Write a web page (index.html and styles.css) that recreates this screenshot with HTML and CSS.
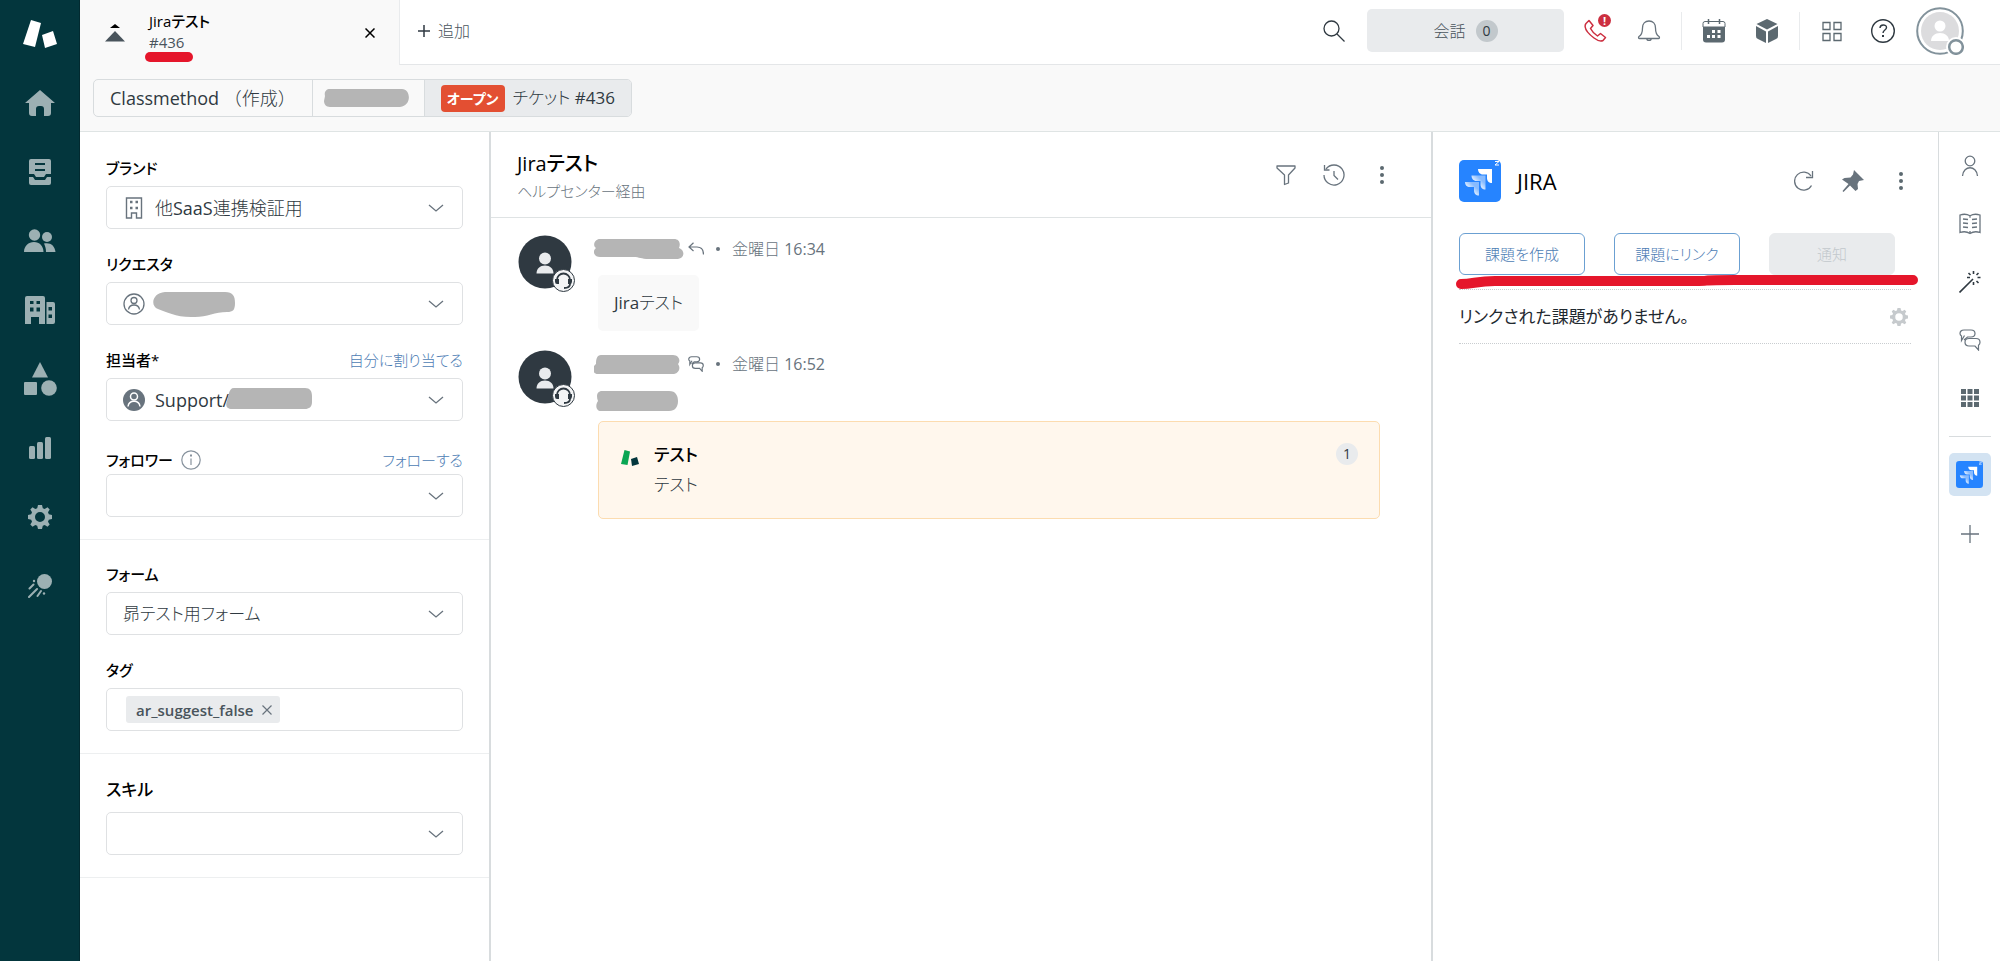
FILE: index.html
```html
<!DOCTYPE html>
<html lang="ja">
<head>
<meta charset="utf-8">
<title>Jiraテスト #436</title>
<link rel="stylesheet" href="styles.css">
</head>
<body>
<svg class="sprite" aria-hidden="true">
  <defs>
    <linearGradient id="fade" x1="1" y1="0" x2="0" y2="1"><stop offset="0.3" stop-color="#fff" stop-opacity="0.45"/><stop offset="0.7" stop-color="#fff"/></linearGradient>
  </defs>
  <symbol id="chevron" viewBox="0 0 16 16"><path d="M1 5l7 6 7-6" fill="none" stroke="currentColor" stroke-width="1.3"/></symbol>
  <symbol id="dots" viewBox="0 0 6 20"><circle cx="3" cy="3" r="2"/><circle cx="3" cy="10" r="2"/><circle cx="3" cy="17" r="2"/></symbol>
  <symbol id="gear" viewBox="0 0 24 24"><path fill-rule="evenodd" d="M10 0h4l.8 3.2 1.9.8L19.500 2.300l2.200 2.200L20 7.300l.8 1.900L24 10v4l-3.200.8-.8 1.900 1.700 2.800-2.200 2.200L16.700 20l-1.900.8L14 24h-4l-.8-3.200-1.900-.8-2.800 1.700-2.200-2.200L4 16.700l-.8-1.900L0 14v-4l3.200-.8L4 7.300 2.300 4.500l2.200-2.200L7.300 4l1.900-.8zM12 7a5 5 0 100 10 5 5 0 000-10z"/></symbol>
  <symbol id="jira" viewBox="0 0 42 42"><rect width="42" height="42" rx="5" fill="#2684ff"/><path d="M19 9h14v14c-3 0-5-2-5-5v-3.500h-4c-3 0-5-2.500-5-5.500z" fill="#fff"/><path d="M12.500 15.500h14v14c-3 0-5-2-5-5V21h-4c-3 0-5-2.500-5-5.500z" fill="url(#fade)"/><path d="M6 22h14v13.500c-3 0-5-2-5-5v-3.500h-4c-3 0-5-2-5-5z" fill="url(#fade)"/><path d="M36 1.500h4L36 5h4" fill="none" stroke="#fff" stroke-width="1"/></symbol>
  <symbol id="chat" viewBox="0 0 22 22"><path d="M5.500 6.500L2.500 11.500V7C1.500 6.300 1 5.500 1 4.500 1 2.500 2.500 1 5 1h7c2.500 0 4 1.500 4 3.500S14.500 8 12 8H8.500L5 11" /><path d="M10 9.500h7c2.500 0 4 1.700 4 3.700 0 1.300-.6 2.300-1.500 3V21l-3.500-4h-6c-2.500 0-4-1.700-4-3.700s1.500-3.800 4-3.800z"/></symbol>
  <symbol id="agent" viewBox="0 0 58 58"><circle cx="27" cy="27" r="26.500" fill="#2f3941"/><circle cx="27" cy="23.500" r="6" fill="#e9ebed"/><path d="M18.500 38.500c0-5 3.500-8 8.500-8s8.500 3 8.500 8z" fill="#e9ebed"/><circle cx="45.500" cy="45.500" r="11" fill="#f3f4f5" stroke="#2f3941"/><path d="M39 45a6.500 6.500 0 0113 0v4c0 2.500-2 4-6 4" fill="none" stroke="#2f3941" stroke-width="1.800"/><path d="M37 44h4v5h-2a2 2.500 0 01-2-2.500zM50 44h4v2.500a2 2.500 0 01-2 2.500h-2z" fill="#2f3941"/></symbol>
</svg>

<div class="app">
  <nav class="nav" aria-label="メイン">
    <a class="nav-logo" href="#" aria-label="ロゴ"><svg width="36" height="28" viewBox="0 0 36 28"><path d="M9 0l10 3-6 24-12-3z M20 15l11-4 4 13-12 4z" fill="#fff"/></svg></a>
    <a class="nav-item" href="#" aria-label="ホーム"><svg width="30" height="26" viewBox="0 0 30 26"><path d="M15 0l15 13h-4v10a3 3 0 01-3 3h-4v-7a3 3 0 00-3-3h-2a3 3 0 00-3 3v7H7a3 3 0 01-3-3V13H0z"/></svg></a>
    <a class="nav-item" href="#" aria-label="ビュー"><svg width="24" height="26" viewBox="0 0 24 26"><path fill-rule="evenodd" d="M3 0h18a2 2 0 012 2v13h-5l-2 3H8l-2-3H1V2a2 2 0 012-2zm4 4v2h10V4zm0 6v2h10v-2zM1 18h4l2 3h10l2-3h4v6a2 2 0 01-2 2H3a2 2 0 01-2-2z"/></svg></a>
    <a class="nav-item" href="#" aria-label="カスタマー"><svg width="32" height="23" viewBox="0 0 32 23"><circle cx="10.500" cy="6" r="5.700"/><circle cx="23" cy="8" r="5"/><path d="M0 23c0-6 4.500-10 10-10s9.500 4 9.500 10zM20 14.500c6-1.500 11 2 11.500 8.500H22c0-4-1-6-2-8.500z"/></svg></a>
    <a class="nav-item" href="#" aria-label="組織"><svg width="30" height="28" viewBox="0 0 30 28"><path fill-rule="evenodd" d="M2 0h16a2 2 0 012 2v26h-6v-7H6v7H0V2a2 2 0 012-2zm3 5v3h3.500V5zm6.500 0v3H15V5zM5 11.500v4h3.500v-4zm6.500 0v4H15v-4zM21.500 6H28a2 2 0 012 2v18a2 2 0 01-2 2h-6.500zM23.500 11v3.500H27V11zm0 7.500V22H27v-3.500z"/></svg></a>
    <a class="nav-item" href="#" aria-label="オブジェクト"><svg width="34" height="34" viewBox="0 0 34 34"><path d="M17 0l8 15.500H9z"/><rect x="1" y="20" width="13" height="13" rx="1"/><circle cx="26" cy="26" r="7.800"/></svg></a>
    <a class="nav-item" href="#" aria-label="レポート"><svg width="24" height="22" viewBox="0 0 24 22"><rect x="1" y="9" width="6" height="13" rx="1.500"/><rect x="9" y="5" width="6" height="17" rx="1.500"/><rect x="17" y="0" width="6" height="22" rx="1.500"/></svg></a>
    <a class="nav-item" href="#" aria-label="設定"><svg width="24" height="24"><use href="#gear"/></svg></a>
    <a class="nav-item" href="#" aria-label="その他"><svg width="24" height="24" viewBox="0 0 24 24"><circle cx="16.500" cy="7.500" r="7.500"/><circle cx="6" cy="7" r="1.200"/><circle cx="16" cy="19.500" r="1.200"/><path d="M1.500 14.500l4-4M1 23l8-8M9.500 22l3.500-5" fill="none" stroke="#9cb0b3" stroke-width="2" stroke-linecap="round"/></svg></a>
  </nav>

  <div class="workspace">
    <header class="topbar">
      <div class="tab">
        <svg class="tab-icon" width="20" height="18" viewBox="0 0 20 18"><path d="M10 0l5 4H5z" fill="#000"/><path d="M10 7l10 10.500H0z" fill="#49545c"/></svg>
        <div class="tab-text">
          <div class="tab-title">Jiraテスト</div>
          <div class="tab-id">#436</div>
          <span class="tab-mark"></span>
        </div>
        <button class="icon-btn" aria-label="閉じる"><svg width="10" height="10" viewBox="0 0 10 10"><path d="M.5.500l9 9m0-9l-9 9" stroke="#000" stroke-width="1.500"/></svg></button>
      </div>
      <div class="topbar-rest">
        <button class="add"><svg width="12" height="12" viewBox="0 0 12 12"><path d="M6 0v12M0 6h12" stroke="#2f3941" stroke-width="1.500"/></svg>追加</button>
        <div class="tools">
          <button class="icon-btn" aria-label="検索"><svg width="24" height="24" viewBox="0 0 24 24" fill="none" stroke="#2f3941" stroke-width="1.300"><circle cx="8.500" cy="9.500" r="7.500"/><path d="M14 15l7.500 7.500"/></svg></button>
          <button class="talk">会話<span class="talk-count">0</span></button>
          <button class="icon-btn call" aria-label="通話"><svg width="24" height="24" viewBox="0 0 24 24" fill="none" stroke="#cc2f40" stroke-width="1.500" stroke-linejoin="round"><path d="M2 4.500L5 1.500l4 5-2.500 3c1.500 3 4 5.500 7 7.500l3-2.500 5 4-2.500 3c-2 1-5 .5-9-2.500S1.500 11 1.200 8c-.2-1.500.1-2.700.8-3.500z"/></svg><span class="alert">!</span></button>
          <button class="icon-btn spaced" aria-label="お知らせ"><svg width="24" height="24" viewBox="0 0 24 24" fill="none" stroke="#68737d" stroke-width="1.300"><path d="M12 2c4 0 6.500 3 6.500 7 0 5 1 7 3.500 8.500.8.800.5 2-.5 2H2.500c-1 0-1.300-1.200-.5-2C4.500 16 5.500 14 5.500 9c0-4 2.500-7 6.500-7zM9.800 19.500c0 2.600 4.400 2.600 4.400 0"/></svg></button>
          <span class="sep"></span>
          <button class="icon-btn" aria-label="カレンダー"><svg width="24" height="24" viewBox="0 0 24 24"><path d="M3 2.500h18a2 2 0 012 2V8H1V4.500a2 2 0 012-2z" fill="#fff" stroke="#5c6970"/><path d="M1 8h22v12.500a3 3 0 01-3 3H4a3 3 0 01-3-3z" fill="#5c6970"/><path d="M6.500 0v5M17.500 0v5" stroke="#5c6970" stroke-width="1.500"/><path d="M10 11h3v3h-3zM15.500 11h3v3h-3zM5 16h3v3H5zM10 16h3v3h-3zM15.500 16h3v3h-3z" fill="#fff"/></svg></button>
          <button class="icon-btn spaced" aria-label="アプリ"><svg width="24" height="26" viewBox="0 0 24 26" fill="#5c6970"><path d="M12 1l10.500 5L12 11.500 1.500 6z M1 8l10 5.500V25L3 21a3 3 0 01-2-3z M23 8l-10 5.500V25l8-4a3 3 0 002-3z"/></svg></button>
          <span class="sep"></span>
          <button class="icon-btn" aria-label="製品"><svg width="24" height="24" viewBox="0 0 24 24" fill="none" stroke="#5c6970" stroke-width="1.300"><path d="M3 3.500h7v7H3zM14 3.500h7v7h-7zM3 14.500h7v7H3zM14 14.500h7v7h-7z"/></svg></button>
          <button class="icon-btn help" aria-label="ヘルプ"><svg width="26" height="26" viewBox="0 0 26 26" fill="none" stroke="#2f3941" stroke-width="1.400"><circle cx="13" cy="13" r="11.300"/><path d="M10 10c0-4 6.500-4 6.500-.5 0 2.500-3.500 2.500-3.500 5.500"/><path d="M13 17v2" stroke-width="2"/></svg></button>
          <button class="icon-btn" aria-label="プロフィール"><svg width="48" height="48" viewBox="0 0 48 48"><circle cx="24" cy="24" r="22.800" fill="#fff" stroke="#82929b" stroke-width="2"/><circle cx="24" cy="24" r="19" fill="#dcdcde"/><circle cx="24" cy="19" r="5.500" fill="#fff"/><path d="M15 34c0-5 4-8 9-8s9 3 9 8z" fill="#fff"/><circle cx="40" cy="40" r="10" fill="#fff"/><circle cx="40" cy="40" r="6.800" fill="#fff" stroke="#82929b" stroke-width="2.500"/></svg></button>
        </div>
      </div>
    </header>

    <div class="crumbs">
      <div class="crumb-group">
        <a class="crumb" href="#">Classmethod （作成）</a>
        <a class="crumb crumb-masked" href="#" aria-label="リクエスタ"><svg width="86" height="18" viewBox="0 0 86 18"><path d="M6 0h72c9 0 10 17-2 18H6c-4 0-6-3-6-6l1-5c-1-4 1-7 5-7z" fill="#b5b5b5"/></svg></a>
        <a class="crumb crumb-active" href="#"><span class="status">オープン</span>チケット #436</a>
      </div>
    </div>

    <div class="columns">
      <section class="panel props">
        <div class="group">
          <div class="field">
            <div class="label-row"><label for="brand">ブランド</label></div>
            <div class="box"><svg class="lead" width="22" height="22" viewBox="0 0 22 22" fill="none" stroke="#68737d" stroke-width="1.400"><path d="M3.500 1h15v20h-5v-5h-5v5h-5z"/><path d="M7 5h2.500M12.500 5H15M7 11h2.500M12.500 11H15" stroke-width="2.500"/></svg><select id="brand"><option>他SaaS連携検証用</option></select><svg class="chev"><use href="#chevron"/></svg></div>
          </div>
          <div class="field">
            <div class="label-row"><label for="requester">リクエスタ</label></div>
            <div class="box"><svg class="lead" width="22" height="22" viewBox="0 0 22 22" fill="none" stroke="#68737d" stroke-width="1.300"><circle cx="11" cy="11" r="10"/><circle cx="11" cy="7.500" r="3"/><path d="M5.500 16.500c1-6 10-6 11 0"/></svg><svg class="mask-requester" width="82" height="26" viewBox="0 0 82 26"><path d="M12 0h60c8 0 10 4 10 11 0 7-2 9-8 9-12 0-20 5-32 5C24 26 14 20 5 17-3 14-1 1 12 0z" fill="#b5b5b5"/></svg><select id="requester"><option></option></select><svg class="chev"><use href="#chevron"/></svg></div>
          </div>
          <div class="field">
            <div class="label-row"><label for="assignee">担当者*</label><a href="#">自分に割り当てる</a></div>
            <div class="box"><svg class="lead" width="22" height="22" viewBox="0 0 22 22"><circle cx="11" cy="11" r="11" fill="#68737d"/><g fill="none" stroke="#fff" stroke-width="1.500"><circle cx="11" cy="7.500" r="3.500"/><path d="M5 17.500c1-7 11-7 12 0"/></g></svg><select id="assignee"><option>Support/</option></select><svg class="mask-assignee" width="86" height="21" viewBox="0 0 86 21"><path d="M8 0h71c5 0 7 3 7 8v6c0 5-3 7-7 7H6c-5 0-7-3-5-8l2-8c1-3 2-5 5-5z" fill="#b5b5b5"/></svg><svg class="chev"><use href="#chevron"/></svg></div>
          </div>
          <div class="field">
            <div class="label-row label-low"><label for="follower">フォロワー</label><svg width="20" height="20" viewBox="0 0 20 20" fill="none" stroke="#87929d" stroke-width="1.200"><circle cx="10" cy="10" r="9.200"/><path d="M10 8.500V15"/><path d="M10 4.500v2" stroke-width="2"/></svg><a href="#">フォローする</a></div>
            <div class="box"><select id="follower"><option></option></select><svg class="chev"><use href="#chevron"/></svg></div>
          </div>
        </div>
        <div class="group">
          <div class="field">
            <div class="label-row"><label for="form">フォーム</label></div>
            <div class="box box-form"><select id="form"><option>昴テスト用フォーム</option></select><svg class="chev"><use href="#chevron"/></svg></div>
          </div>
          <div class="field">
            <div class="label-row"><label for="tags">タグ</label></div>
            <div class="box"><span class="tag">ar_suggest_false<button class="icon-btn" aria-label="削除"><svg width="10" height="10" viewBox="0 0 10 10"><path d="M.5.500l9 9m0-9l-9 9" stroke="#68737d" stroke-width="1.200"/></svg></button></span><input id="tags" type="text"></div>
          </div>
        </div>
        <div class="group group-skill">
          <div class="field">
            <div class="label-row"><label for="skill">スキル</label></div>
            <div class="box"><select id="skill"><option></option></select><svg class="chev"><use href="#chevron"/></svg></div>
          </div>
        </div>
      </section>

      <main class="panel convo">
        <div class="convo-head">
          <div>
            <h1>Jiraテスト</h1>
            <div class="via">ヘルプセンター経由</div>
          </div>
          <div class="convo-tools">
            <button class="icon-btn" aria-label="フィルタ"><svg width="22" height="22" viewBox="0 0 22 22" fill="none" stroke="#68737d" stroke-width="1.300" stroke-linejoin="round"><path d="M2 2h18v2l-6.500 7v8l-4 1.500V11L2 4z"/></svg></button>
            <button class="icon-btn" aria-label="履歴"><svg width="22" height="22" viewBox="0 0 22 22" fill="none" stroke="#68737d" stroke-width="1.300"><path d="M3 5a10 10 0 11-2 6M11 7v4.500l4 4"/><path d="M1.500 1v5h5"/></svg></button>
            <button class="icon-btn dots" aria-label="メニュー"><svg width="6" height="20"><use href="#dots"/></svg></button>
          </div>
        </div>
        <div class="thread">
          <article class="msg">
            <svg class="avatar" width="58" height="58"><use href="#agent"/></svg>
            <div class="msg-main">
              <div class="meta"><svg width="90" height="20" viewBox="0 0 90 20"><path d="M6 0h74c5 0 7 4 5 9 6 2 6 10-1 11H55c-8 0-10-2-15-2H6c-6 0-8-6-4-9-4-3-1-9 4-9z" fill="#b5b5b5"/></svg><svg width="16" height="14" viewBox="0 0 16 14" fill="none" stroke="#68737d" stroke-width="1.200"><path d="M5.500.800L1 5l4.500 4M1 5h8c4.500 0 6.500 3 6.500 7.500"/></svg><span class="bullet"></span><time>金曜日 16:34</time></div>
              <div class="bubble">Jiraテスト</div>
            </div>
          </article>
          <article class="msg">
            <svg class="avatar" width="58" height="58"><use href="#agent"/></svg>
            <div class="msg-main">
              <div class="meta"><svg width="90" height="20" viewBox="0 0 90 20"><path d="M7 1h72c6 0 8 6 5 9 3 4 1 9-4 10H4c-6 0-6-7-2-10 0-5 1-9 5-9z" fill="#b5b5b5"/></svg><svg width="16" height="16" fill="none" stroke="#68737d" stroke-width="1.600"><use href="#chat"/></svg><span class="bullet"></span><time>金曜日 16:52</time></div>
              <svg class="mask-mention" width="82" height="20" viewBox="0 0 82 20"><path d="M6 0h67c7 0 9 5 9 10 0 6-3 10-9 10H5c-5 0-6-6-3-10-2-5-1-10 4-10z" fill="#b5b5b5"/></svg>
              <div class="card">
                <svg width="18" height="16" viewBox="0 0 18 16"><path d="M3.500 0L9 1.500 6.500 15 0 14z" fill="#0aa653"/><path d="M10 9l6-2 2 7-7 2z" fill="#03363d"/></svg>
                <div class="card-text"><div class="card-title">テスト</div><div>テスト</div></div>
                <span class="count">1</span>
              </div>
            </div>
          </article>
        </div>
      </main>

      <aside class="panel jira">
        <div class="jira-head">
          <svg width="42" height="42"><use href="#jira"/></svg>
          <h2>JIRA</h2>
          <div class="jira-tools">
            <button class="icon-btn" aria-label="更新"><svg width="20" height="20" viewBox="0 0 20 20" fill="none" stroke="#68737d" stroke-width="1.300"><path d="M17.500 14.500a9 9 0 11-.5-9.500M18.500 0v6.500H12"/></svg></button>
            <button class="icon-btn" aria-label="ピン留め"><svg width="22" height="22" viewBox="0 0 22 22" fill="#68737d"><path d="M12 0l10 10-5 1-1.500 3 .5 5-2.500 2-5.500-5.500L1.500 22l-1-1 6-7L0 9.500 2.500 8l6-.5 2.500-3z"/></svg></button>
            <button class="icon-btn" aria-label="メニュー"><svg width="6" height="20"><use href="#dots"/></svg></button>
          </div>
        </div>
        <div class="jira-actions">
          <button class="btn">課題を作成</button>
          <button class="btn">課題にリンク</button>
          <button class="btn" disabled>通知</button>
          <svg class="underline" viewBox="0 0 464 15" preserveAspectRatio="none"><path d="M6 9c12 0 16-3 34-3h200c20 0 0-1 40-1h178" fill="none" stroke="#e5162b" stroke-width="10" stroke-linecap="round"/></svg>
        </div>
        <div class="jira-empty">リンクされた課題がありません。<button class="icon-btn" aria-label="設定"><svg width="18" height="18" fill="#c6cacd"><use href="#gear"/></svg></button></div>
      </aside>

      <nav class="rail" aria-label="サイドパネル">
        <button class="rail-item" aria-label="ユーザー"><svg width="22" height="22" viewBox="0 0 22 22" fill="none" stroke="#68737d" stroke-width="1.300"><circle cx="11" cy="6" r="4.800"/><path d="M3.500 21c1-11 14-11 15 0"/></svg></button>
        <button class="rail-item" aria-label="ナレッジ"><svg width="22" height="22" viewBox="0 0 22 22" fill="none" stroke="#68737d" stroke-width="1.300"><path d="M1 2c3-1 7-1 10 .7C14 1 18 1 21 2v17.500c-3-1-7-1-10 1-3-2-7-2-10-1zM11 2.700v2M11 18v2.500M4 6l5 .5M4 10l5 .5M4 14l5 .5M18 6l-5 .5M18 10l-5 .5M18 14l-5 .5"/></svg></button>
        <button class="rail-item" aria-label="提案"><svg width="22" height="22" viewBox="0 0 22 22" fill="none" stroke="#2f3941" stroke-width="1.600"><path d="M.5 21.500L14 8M14.500 0v3M14.500 11v3M8 6.500h3M18.500 6.500h3M9.500 2l2 2M19.500 2l-2 2M19.500 12l-2-2"/></svg></button>
        <button class="rail-item" aria-label="サイド会話"><svg width="22" height="22" fill="none" stroke="#68737d" stroke-width="1.200"><use href="#chat"/></svg></button>
        <button class="rail-item" aria-label="アプリ"><svg width="20" height="20" viewBox="0 0 20 20" fill="#5c6970"><path d="M1 1h5v5H1zM7.500 1h5v5h-5zM14 1h5v5h-5zM1 7.500h5v5H1zM7.500 7.500h5v5h-5zM14 7.500h5v5h-5zM1 14h5v5H1zM7.500 14h5v5h-5zM14 14h5v5h-5z"/></svg></button>
        <span class="rail-sep"></span>
        <button class="rail-active" aria-label="JIRA"><svg width="27" height="27"><use href="#jira"/></svg></button>
        <button class="rail-item" aria-label="追加"><svg width="18" height="18" viewBox="0 0 18 18"><path d="M9 0v18M0 9h18" stroke="#68737d" stroke-width="1.300"/></svg></button>
      </nav>
    </div>
  </div>
</div>
</body>
</html>
```
FILE: styles.css
```css
* { box-sizing: border-box; }
body {
  margin: 0;
  font-family: "Open Sans", "Noto Sans CJK JP Light", "Noto Sans CJK JP", sans-serif;
  font-feature-settings: "palt";
  font-size: 18px;
  line-height: 24px;
  color: #2f3941;
  background: #fff;
}
svg { display: block; flex: none; }
button, input, select { font: inherit; color: inherit; font-feature-settings: inherit; }
a { color: inherit; text-decoration: none; }
h1, h2 { margin: 0; font-weight: 500; color: #000; }
h1, h2, label, .tab-title, .status, .card-title, .jira-empty { font-family: "Open Sans", "Noto Sans CJK JP", sans-serif; }
.sprite { position: absolute; width: 0; height: 0; }
.icon-btn { display: block; padding: 0; border: 0; background: none; fill: #5c6970; }

.app { display: flex; min-height: 100vh; }
.nav { flex: none; width: 80px; background: #03363d; border-right: 1px solid #022a30; fill: #9cb0b3; }
.nav-logo { display: flex; align-items: center; justify-content: center; height: 68px; }
.nav-item { display: flex; align-items: center; justify-content: center; height: 69px; }
.workspace { flex: 1; min-width: 0; display: flex; flex-direction: column; }

.topbar { display: flex; height: 65px; background: #f9f9f9; }
.tab { display: flex; align-items: center; width: 319px; padding: 0 24px 0 25px; }
.tab-text { position: relative; flex: 1; margin-left: 24px; padding-bottom: 2px; font-size: 15px; line-height: 21px; }
.tab-title { font-weight: 500; color: #000; }
.tab-id { color: #49545c; }
.tab-mark { position: absolute; left: -4px; bottom: -7px; width: 48px; height: 10px; border-radius: 5px; background: #e5162b; }
.topbar-rest { flex: 1; display: flex; align-items: center; justify-content: space-between; padding: 0 36px 3px 18px; background: #fff; border-left: 1px solid #e9ebed; border-bottom: 1px solid #e4e6e8; }
.add { display: flex; align-items: center; gap: 8px; padding: 0; border: 0; background: none; font-size: 16px; color: #49545c; }
.tools { display: flex; align-items: center; gap: 20px; }
.talk { display: flex; align-items: center; justify-content: center; gap: 10px; width: 197px; height: 43px; border: 0; border-radius: 5px; background: #e9ebed; font-size: 16px; color: #49545c; }
.talk-count { width: 22px; line-height: 22px; border-radius: 50%; background: #c2c8cc; font-size: 14px; color: #2f3941; }
.call { position: relative; }
.alert { position: absolute; left: 14px; top: -5px; width: 13px; height: 13px; border-radius: 50%; background: #cc2f40; color: #fff; font-size: 11px; line-height: 13px; font-weight: 700; }
.spaced { margin-left: 9px; }
.help { margin-left: 6px; }
.sep { width: 1px; height: 38px; background: #e9ebed; }

.crumbs { padding: 14px 13px; background: #f9f9f9; border-bottom: 1px solid #dfe4e4; }
.crumb-group { display: inline-flex; vertical-align: top; border: 1px solid #d8dcde; border-radius: 5px; overflow: hidden; }
.crumb { display: flex; align-items: center; height: 36px; padding: 0 16px; border-left: 1px solid #d8dcde; }
.crumb:first-child { border-left: 0; font-feature-settings: normal; }
.crumb-masked { padding: 0 14px 0 11px; }
.crumb-active { gap: 8px; background: #e9ebed; font-size: 17px; }
.status { padding: 0 6px; border-radius: 4px; background: #e34f32; color: #fff; font-size: 14px; line-height: 27px; font-weight: 700; }

.columns { flex: 1; display: flex; align-items: stretch; }
.panel { border-right: 2px solid #d8dcde; }
.props { flex: none; width: 411px; }
.group { display: flex; flex-direction: column; gap: 23px; padding: 22px 26px; border-bottom: 1px solid #edeff0; }
.label-row { display: flex; align-items: center; height: 24px; margin-bottom: 6px; font-size: 15px; font-weight: 500; color: #000; }
.label-row svg { margin-left: 8px; }
.label-row a { margin-left: auto; color: #4c7cb4; font-weight: 400; }
.label-low { padding-top: 8px; }
.group-skill .label-row { margin-bottom: 10px; font-size: 17px; }
.box { position: relative; display: flex; align-items: center; height: 43px; padding: 0 18px 0 16px; border: 1px solid #dfe1e3; border-radius: 5px; }
.box-form { font-size: 17px; }
.box .lead { margin-right: 10px; }
.box select { flex: 1; min-width: 0; padding: 0; border: 0; background: none; appearance: none; outline: 0; color: #2f3941; }
.box input { flex: 1; min-width: 0; border: 0; outline: 0; }
.chev { width: 16px; height: 16px; color: #68737d; }
.mask-requester { margin: 3px 0 0 -2px; }
.mask-assignee { position: absolute; left: 119px; top: 9px; }
.tag { display: flex; align-items: center; gap: 8px; height: 27px; margin-left: 3px; padding: 0 8px 0 10px; border-radius: 3px; background: #e9ebed; font-size: 15px; font-weight: 600; color: #49545c; }
.group:first-child { padding-top: 24px; }
.group-skill { padding-top: 24px; }

.convo { flex: 1; min-width: 0; }
.convo-head { display: flex; justify-content: space-between; height: 86px; padding: 18px 46px 0 26px; border-bottom: 1px solid #dfe3e4; }
.convo h1 { font-size: 20px; line-height: 28px; }
.via { font-size: 15px; line-height: 26px; color: #68737d; }
.convo-tools { display: flex; align-items: center; gap: 26px; height: 50px; }
.dots { margin-left: 8px; }
.thread { display: flex; flex-direction: column; gap: 19px; padding: 17px 51px 24px 27px; }
.msg { display: flex; align-items: flex-start; }
.msg-main { flex: 1; min-width: 0; padding: 2px 0 0 22px; }
.meta { display: flex; align-items: center; gap: 4px; height: 24px; margin-left: -4px; font-size: 16px; color: #68737d; }
.bullet { width: 4px; height: 4px; margin: 0 8px; border-radius: 50%; background: #68737d; }
.bubble { display: inline-block; vertical-align: top; margin-top: 14px; padding: 16px; border-radius: 5px; background: #f9f9f9; font-size: 17px; }
.mask-mention { margin: 15px 0 10px -2px; }
.card { display: flex; align-items: flex-start; min-height: 98px; padding: 18px 21px; border: 1px solid #fcdcb0; border-radius: 5px; background: #fff7ed; color: #2f3941; font-size: 17px; }
.card > svg { margin: 10px 15px 0 1px; }
.card-text { flex: 1; line-height: 30px; }
.card-title { font-weight: 500; color: #000; }
.count { width: 22px; margin-top: 3px; border-radius: 50%; background: #e9ebed; font-size: 14px; line-height: 22px; text-align: center; }

.jira { flex: none; width: 506px; padding: 28px 27px 0 26px; border-right-width: 1px; }
.jira-head { display: flex; align-items: center; gap: 16px; }
.jira-head h2 { font-size: 22px; line-height: 28px; }
.jira-tools { display: flex; align-items: center; gap: 28px; margin-left: auto; padding-right: 7px; }
.jira-tools .icon-btn:last-child { margin-left: 6px; }
.jira-actions { position: relative; display: flex; gap: 29px; margin-top: 31px; padding: 0 16px 14px 0; border-bottom: 1px dotted #c9cdd0; }
.btn { flex: 1; height: 42px; padding: 0; border: 1px solid #6ba0d2; border-radius: 6px; background: #fff; font-size: 15px; color: #4c7cb4; }
.btn:disabled { border-color: #e9ebed; background: #e9ebed; color: #c2c8cc; }
.underline { position: absolute; left: -4px; bottom: -1px; width: calc(100% + 12px); height: 15px; }
.jira-empty { display: flex; align-items: center; justify-content: space-between; height: 54px; padding-right: 3px; border-bottom: 1px dotted #c9cdd0; color: #1f2930; font-size: 17px; }

.rail { flex: none; width: 61px; display: flex; flex-direction: column; align-items: center; padding-top: 5px; }
.rail-item { display: flex; align-items: center; justify-content: center; width: 42px; height: 58px; padding: 0; border: 0; background: none; }
.rail-sep { width: 42px; height: 1px; margin: 9px 0 16px; background: #d8dcde; }
.rail-active { display: flex; align-items: center; justify-content: center; width: 42px; height: 43px; margin-bottom: 9px; padding: 0; border: 0; border-radius: 5px; background: #d3e3f2; }
```
